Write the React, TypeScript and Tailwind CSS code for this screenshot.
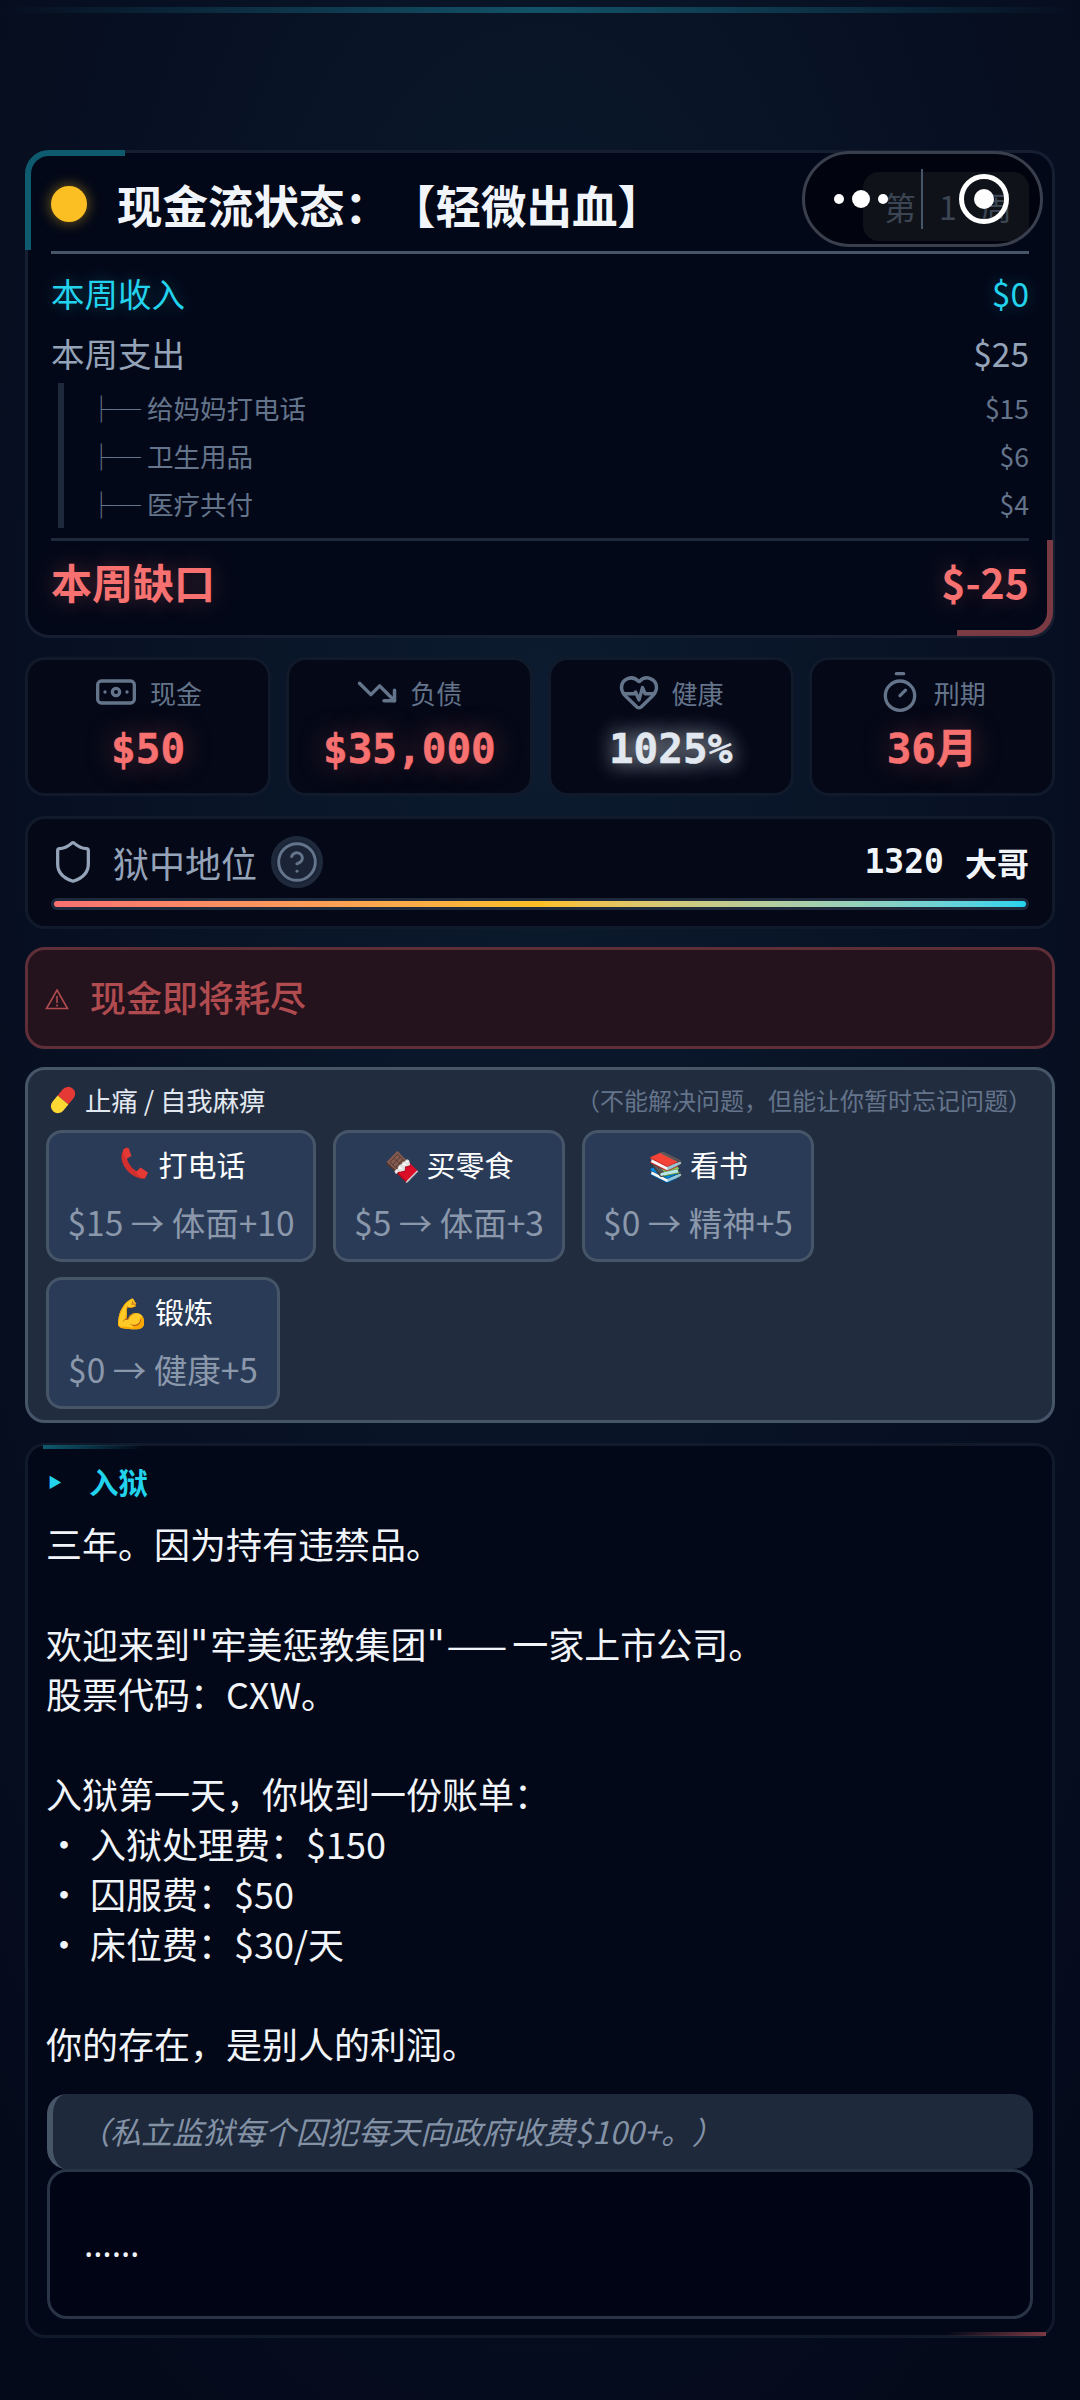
import { Banknote, TrendingDown, HeartPulse, Timer, Shield, CircleHelp } from "lucide-react";

const cjk = "font-['Noto_Sans_CJK_SC','Noto_Sans',sans-serif]";
const mono = "font-['DejaVu_Sans_Mono','Noto_Sans_CJK_SC',monospace]";

function Stat({ icon, label, value, tone }: { icon: React.ReactNode; label: string; value: string; tone: "red" | "white" }) {
  return (
    <div className="h-[139px] rounded-[20px] border-[3px] border-[#111a2b] bg-[#040817] flex flex-col items-center">
      <div className="mt-[7px] h-[50px] flex items-center gap-[12px] text-[26px] text-[#64748b]">
        {icon}
        <span>{label}</span>
      </div>
      <div
        className={
          tone === "red"
            ? `mt-[7px] text-[41px] leading-[50px] font-bold text-[#f87171] ${mono} [-webkit-text-stroke:0.5px_#f87171] [text-shadow:0_0_30px_rgba(248,113,113,0.4)]`
            : `mt-[7px] text-[41px] leading-[50px] font-bold text-[#e2e8f0] ${mono} [-webkit-text-stroke:0.5px_#e2e8f0] [text-shadow:0_0_20px_rgba(226,232,240,0.75),0_0_30px_rgba(226,232,240,0.3)]`
        }
      >
        {value}
      </div>
    </div>
  );
}

function Action({ emoji, title, desc, w }: { emoji: React.ReactNode; title: string; desc: string; w: string }) {
  return (
    <div className={`${w} h-[132px] rounded-[16px] border-[3px] border-[#475569] bg-[#2a3b57] flex flex-col items-center`}>
      <div className="mt-[9px] h-[44px] flex items-center gap-[6px] text-[29px] leading-[44px] text-white">
        <span>{emoji}</span>
        <span>{title}</span>
      </div>
      <div className="mt-[12px] text-[33.5px] leading-[48px] text-[#8b98ab] whitespace-nowrap">{desc}</div>
    </div>
  );
}

function SubRow({ name, value }: { name: string; value: string }) {
  return (
    <div className="h-[48px] flex items-center justify-between text-[26.5px] text-[#64748b]">
      <span className="pl-[24px]">├─ {name}</span>
      <span>{value}</span>
    </div>
  );
}

function Quote() {
  return <span className="font-['DejaVu_Sans'] text-[40px] leading-[1] mr-[2px]">"</span>;
}

function Phone() {
  return (
    <svg width="36" height="34" viewBox="0 0 36 34" className="block">
      <path d="M10.5 3.5 C5 10 10 25 26 29" fill="none" stroke="#d32f2f" strokeWidth="5.5" strokeLinecap="round" />
      <path d="M7 2.5 L12.5 1 L15.5 9 L10 12 C8 9 7 5 7 2.5 Z" fill="#e53935" />
      <path d="M20 25 L24.5 20.5 L32 25.5 L29 31.5 C25.5 31.5 22 29 20 25 Z" fill="#e53935" />
    </svg>
  );
}

function Pill() {
  return (
    <svg width="32" height="32" viewBox="0 0 32 32" className="block">
      <g transform="rotate(40 16 16)">
        <path d="M9 16 V8 A7 7 0 0 1 23 8 V16 Z" fill="#e53935" />
        <path d="M9 16 H23 V24 A7 7 0 0 1 9 24 Z" fill="#fdd835" />
      </g>
    </svg>
  );
}

export default function App() {
  return (
    <div
      className={`relative w-[1080px] h-[2400px] overflow-hidden px-[25px] pt-[150px] ${cjk} [text-spacing-trim:space-all] bg-[#040b1a] bg-[radial-gradient(ellipse_820px_1900px_at_50%_30%,#0c1b2f_0%,#071022_60%,#040a1a_100%)]`}
    >
      <div className="absolute left-0 right-0 top-[7px] h-[6px] bg-gradient-to-r from-transparent via-[#125268] to-transparent" />

      {/* cash flow */}
      <section className="relative h-[488px] rounded-[24px] border-[3px] border-[#161f31] bg-[#030818] px-[23px]">
        <div className="absolute -left-[3px] -top-[3px] w-[100px] h-[100px] rounded-tl-[24px] border-l-[6px] border-t-[6px] border-[#0e5a6e]" />
        <div className="absolute -right-[1px] -bottom-[1px] w-[96px] h-[96px] rounded-br-[24px] border-r-[6px] border-b-[6px] border-[#7a3a44]" />

        <div className="h-[98px] flex items-center justify-between">
          <div className="mt-[4px] flex items-center gap-[30px]">
            <span className="w-[36px] h-[36px] rounded-full bg-[#fbbf24] shadow-[0_0_14px_rgba(251,191,36,0.5)]" />
            <span className="text-[45.5px] leading-[60px] font-bold text-[#f1f5f9]">现金流状态：【轻微出血】</span>
          </div>
          <div className="w-[166px] h-[69px] mt-[8px] pl-[12px] rounded-[16px] bg-[#1a1f2b] flex items-center justify-center tracking-[8px] text-[32px] text-[#64748b] whitespace-nowrap">
            第 1 周
          </div>
        </div>
        <div className="h-[3px] bg-[#475569]" />

        <div className="mt-[9px] h-[60px] flex items-center justify-between text-[33.5px] text-[#22d3ee] [text-shadow:0_0_16px_rgba(34,211,238,0.3)]">
          <span>本周收入</span>
          <span>$0</span>
        </div>
        <div className="h-[60px] flex items-center justify-between text-[33.5px] text-[#94a3b8]">
          <span>本周支出</span>
          <span>$25</span>
        </div>
        <div className="ml-[7px] h-[145px] pt-[1px] border-l-[6px] border-[#1e293b]">
          <SubRow name="给妈妈打电话" value="$15" />
          <SubRow name="卫生用品" value="$6" />
          <SubRow name="医疗共付" value="$4" />
        </div>
        <div className="mt-[10px] h-[3px] bg-[#1e293b]" />
        <div className="h-[82px] flex items-center justify-between text-[41px] font-bold text-[#f87171] [text-shadow:0_0_22px_rgba(248,113,113,0.3)]">
          <span>本周缺口</span>
          <span>$-25</span>
        </div>
      </section>

      {/* stats */}
      <div className="mt-[19px] grid grid-cols-4 gap-[15px]">
        <Stat icon={<Banknote size={44} strokeWidth={1.8} />} label="现金" value="$50" tone="red" />
        <Stat icon={<TrendingDown size={42} strokeWidth={2} />} label="负债" value="$35,000" tone="red" />
        <Stat icon={<HeartPulse size={42} strokeWidth={2} />} label="健康" value="1025%" tone="white" />
        <Stat icon={<Timer size={44} strokeWidth={1.8} />} label="刑期" value="36月" tone="red" />
      </div>

      {/* status */}
      <section className="mt-[20px] h-[113px] rounded-[20px] border-[3px] border-[#111a2b] bg-[#040817] px-[23px]">
        <div className="h-[79px] pt-[7px] flex items-center justify-between">
          <div className="flex items-center text-[36px] text-[#94a3b8]">
            <Shield size={46} strokeWidth={1.7} className="ml-[-1px] text-[#94a3b8]" />
            <span className="ml-[17px]">狱中地位</span>
            <span className="ml-[14px] w-[52px] h-[52px] rounded-full border-[4px] border-[#1e293b] bg-[#1a2436] flex items-center justify-center">
              <CircleHelp size={52} strokeWidth={1.6} className="text-[#64748b]" />
            </span>
          </div>
          <div className="flex items-center gap-[21px] text-[32px] font-bold text-[#f1f5f9]">
            <span className={`${mono} text-[33px] leading-[40px]`}>1320</span>
            <span>大哥</span>
          </div>
        </div>
        <div className="h-[12px] rounded-full bg-[#1e293b] p-[3px]">
          <div className="h-full rounded-full bg-gradient-to-r from-[#f87171] via-[#fbbf24] to-[#22d3ee]" />
        </div>
      </section>

      {/* warning */}
      <section className="mt-[18px] h-[102px] rounded-[20px] border-[3px] border-[#5e2f38] bg-[#24121d] flex items-center pl-[17px] text-[#b04b4f]">
        <svg width="24" height="22" viewBox="0 0 24 22" className="mt-[2px]" fill="none" stroke="currentColor" strokeWidth="1.6">
          <path d="M12 2 L22.5 20.5 H1.5 Z" />
          <path d="M12 8 V15 M12 16.5 V18.5" />
        </svg>
        <span className="ml-[21px] mt-[-4px] text-[36px] font-medium">现金即将耗尽</span>
      </section>

      {/* pain */}
      <section className="mt-[18px] h-[356px] rounded-[20px] border-[3px] border-[#475569] bg-[#222c3f] px-[19px]">
        <div className="h-[60px] flex items-center justify-between pr-[1px]">
          <span className="flex items-center gap-[6px] text-[26.4px] text-[#e2e8f0]">
            <Pill />
            <span>止痛 / 自我麻痹</span>
          </span>
          <span className="text-[24px] text-[#64748b]">（不能解决问题，但能让你暂时忘记问题）</span>
        </div>
        <div className="flex flex-wrap gap-x-[17px] gap-y-[15px] -ml-[1px]">
          <Action w="w-[270px]" emoji={<Phone />} title="打电话" desc="$15 → 体面+10" />
          <Action w="w-[232px]" emoji="🍫" title="买零食" desc="$5 → 体面+3" />
          <Action w="w-[232px]" emoji="📚" title="看书" desc="$0 → 精神+5" />
          <Action w="w-[234px]" emoji="💪" title="锻炼" desc="$0 → 健康+5" />
        </div>
      </section>

      {/* story */}
      <section className="relative mt-[20px] h-[895px] rounded-[20px] border-[3px] border-[#111a2b] bg-[#030818] px-[19px]">
        <div className="absolute left-[15px] -top-[1px] w-[100px] h-[4px] bg-gradient-to-r from-[#0e5a6e] to-transparent" />
        <div className="absolute right-[6px] -bottom-[1px] w-[100px] h-[4px] bg-gradient-to-r from-transparent to-[#7a3a44]" />
        <div className="h-[71px] flex items-center text-[#22d3ee] font-bold text-[29.5px]">
          <span className="w-[42px] text-[14px] pl-[1px]">▶</span>
          <span>入狱</span>
        </div>
        <div className="text-[36px] leading-[50px] text-[#f1f5f9] whitespace-pre-line mt-[1px] -ml-[1px]">
          三年。因为持有违禁品。{"\n\n"}欢迎来到<Quote />牢美惩教集团<Quote /><span className="tracking-[5px]">——</span>一家上市公司。{"\n"}股票代码：CXW。{"\n\n"}入狱第一天，你收到一份账单：{"\n"}・ 入狱处理费：$150{"\n"}・ 囚服费：$50{"\n"}・ 床位费：$30/天{"\n\n"}你的存在，是别人的利润。
        </div>
        <div className="mt-[26px] h-[75px] rounded-[20px] border-l-[6px] border-[#475569] bg-[#1e293b] flex items-center pl-[26px] text-[31px] italic text-[#8492a6]">
          （私立监狱每个囚犯每天向政府收费$100+。）
        </div>
        <div className="h-[150px] rounded-[20px] border-[3px] border-[#2a3447] bg-[#010414] flex items-center pl-[34px] text-[35px] text-[#f1f5f9] font-['Noto_Sans']">
          ……
        </div>
      </section>

      {/* mini-program capsule */}
      <div className="absolute left-[802px] top-[151px] w-[241px] h-[96px] rounded-full border-[3px] border-[#3a3f4e] bg-black/40 flex items-center">
        <div className="ml-[29px] flex items-center gap-[8px]">
          <span className="w-[10px] h-[10px] rounded-full bg-white" />
          <span className="w-[18px] h-[18px] rounded-full bg-white" />
          <span className="w-[10px] h-[10px] rounded-full bg-white" />
        </div>
        <span className="ml-[33px] w-[2px] h-[60px] bg-[#475569]" />
        <span className="ml-[36px] w-[50px] h-[50px] rounded-full border-[5px] border-white flex items-center justify-center">
          <span className="w-[20px] h-[20px] rounded-full bg-white" />
        </span>
      </div>
    </div>
  );
}
